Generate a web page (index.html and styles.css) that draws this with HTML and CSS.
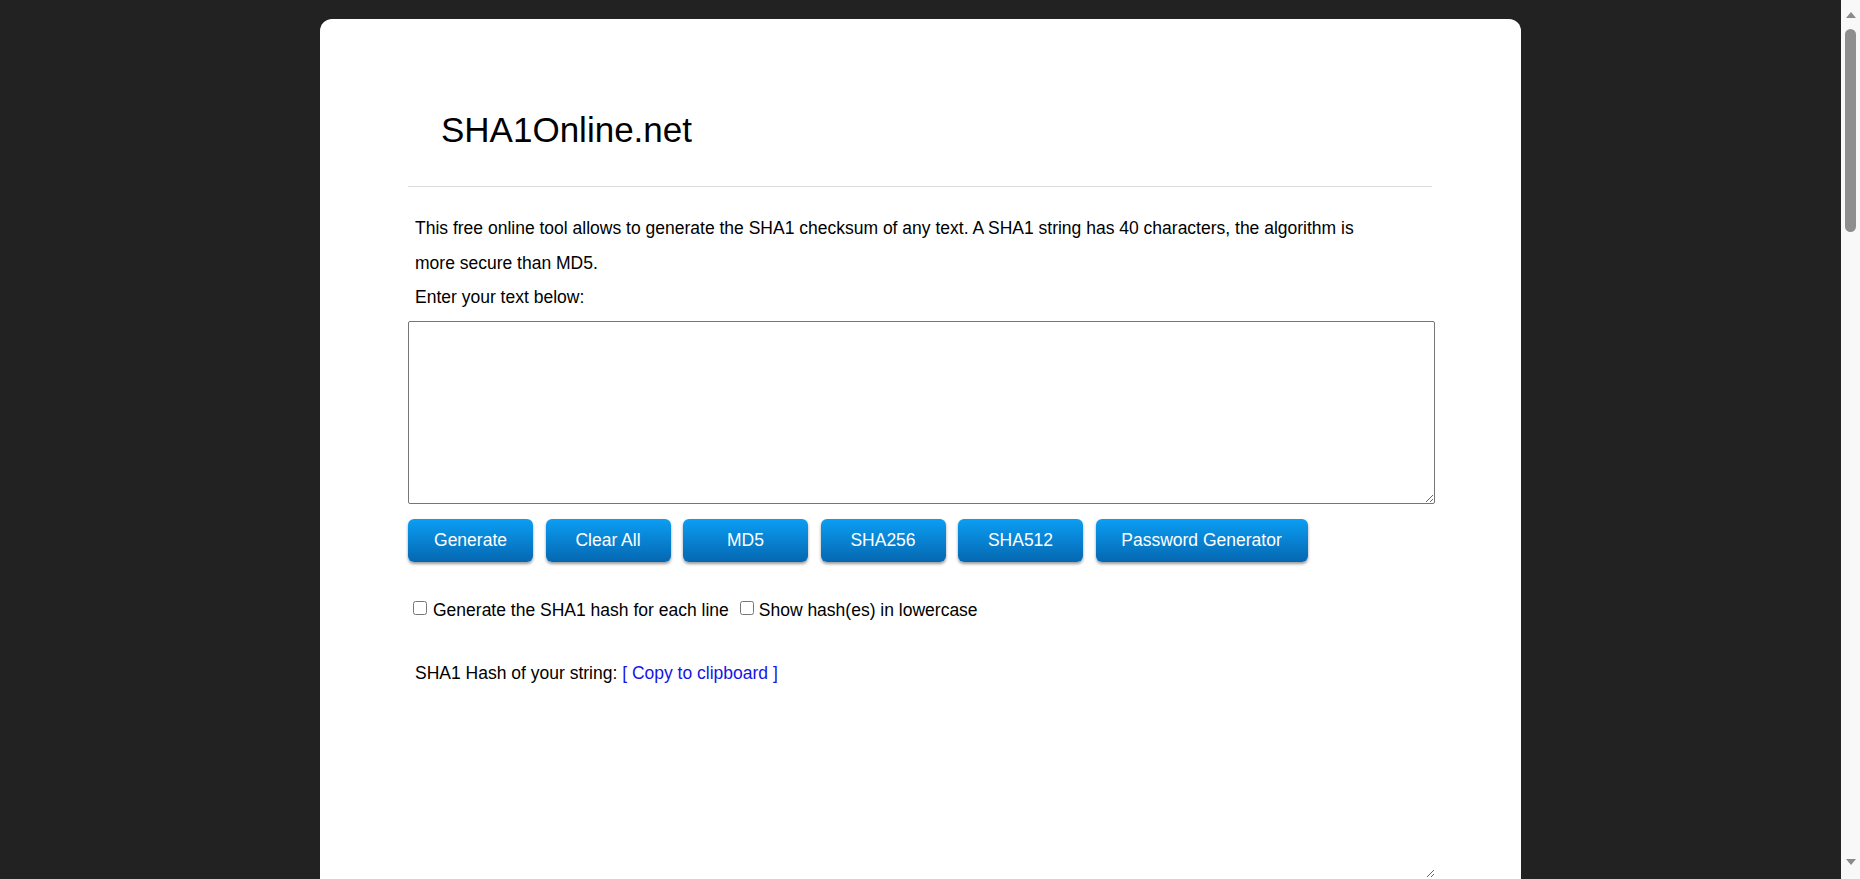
FILE: index.html
```html
<!DOCTYPE html>
<html lang="en">
<head>
<meta charset="utf-8">
<title>SHA1Online.net</title>
<link rel="stylesheet" href="styles.css">
</head>
<body>
<div class="screen">
  <div class="viewport">
    <div class="card">
      <header class="masthead"><h1 class="logo">SHA1Online.net</h1></header>
      <hr class="rule">
      <div class="intro">
        <p class="desc">This free online tool allows to generate the SHA1 checksum of any text. A SHA1 string has 40 characters, the algorithm is more secure than MD5.</p>
        <p class="prompt">Enter your text below:</p>
      </div>
      <textarea class="input-area"></textarea>
      <div class="actions">
        <button class="btn" type="button">Generate</button>
        <button class="btn" type="button">Clear All</button>
        <button class="btn" type="button">MD5</button>
        <button class="btn" type="button">SHA256</button>
        <button class="btn" type="button">SHA512</button>
        <button class="btn btn-wide" type="button">Password Generator</button>
      </div>
      <div class="options">
        <label class="opt"><input type="checkbox" class="check">Generate the SHA1 hash for each line</label>
        <label class="opt"><input type="checkbox" class="check">Show hash(es) in lowercase</label>
      </div>
      <div class="result-label">SHA1 Hash of your string: <a href="#" class="copy">[ Copy to clipboard ]</a></div>
      <textarea class="output-area"></textarea>
    </div>
  </div>
  <div class="scrollbar">
    <span class="arrow arrow-up"></span>
    <span class="thumb"></span>
    <span class="spacer"></span>
    <span class="arrow arrow-down"></span>
  </div>
</div>
</body>
</html>
```
FILE: styles.css
```css
html, body {
  margin: 0;
  height: 100%;
  overflow: hidden;
}
body {
  font-family: "Liberation Sans", Arial, sans-serif;
  font-size: 17.5px;
  color: #000;
}
.screen {
  display: flex;
  height: 100vh;
}
.viewport {
  flex: 1;
  background: #222222;
  overflow: hidden;
}
.card {
  width: 1201px;
  box-sizing: border-box;
  margin: 19px auto 0;
  background: #fff;
  border-radius: 12px;
  padding: 91px 86px 80px 88px;
}
.logo {
  margin: 0;
  font-size: 35px;
  font-weight: normal;
  line-height: 40px;
  padding-left: 33px;
}
.rule {
  margin: 36px 0 0;
  border: 0;
  border-top: 1px solid #dcdcdc;
  height: 0;
  width: 1024px;
}
.intro {
  margin-top: 24px;
  padding-left: 7px;
  line-height: 34.5px;
}
.desc {
  margin: 0;
  max-width: 960px;
}
.prompt {
  margin: 0;
}
.input-area {
  display: block;
  margin: 6px 0 0;
  width: 1027px;
  height: 183px;
  box-sizing: border-box;
  border: 1px solid #767676;
  border-radius: 2px;
}
.actions {
  display: flex;
  gap: 12.5px;
  margin-top: 15px;
}
.btn {
  width: 125px;
  height: 43px;
  border: 0;
  border-radius: 6px;
  background: linear-gradient(#0b9ef3, #0567b1);
  color: #fff;
  font-family: "Liberation Sans", Arial, sans-serif;
  font-size: 17.5px;
  box-shadow: 0 2px 3px rgba(0, 0, 0, 0.4);
  padding: 0;
}
.btn-wide {
  width: 212px;
}
.options {
  display: flex;
  align-items: center;
  margin-top: 36px;
  padding-left: 5px;
  line-height: 24px;
}
.opt {
  display: flex;
  align-items: center;
}
.opt + .opt {
  margin-left: 11px;
}
.check {
  width: 14px;
  height: 14px;
  margin: 0 6px 0 0;
  position: relative;
  top: -2px;
}
.opt + .opt .check {
  margin-right: 5px;
}
.result-label {
  margin-top: 34px;
  padding-left: 7px;
  line-height: 35px;
}
.copy {
  color: #1515e6;
  text-decoration: none;
}
.output-area {
  display: block;
  margin: 5px 0 0;
  width: 1027px;
  height: 182px;
  box-sizing: border-box;
  border: none;
  outline: none;
}
.scrollbar {
  width: 19px;
  background: #f8f8f8;
  display: flex;
  flex-direction: column;
  align-items: center;
}
.arrow {
  width: 0;
  height: 0;
  border-left: 5px solid transparent;
  border-right: 5px solid transparent;
}
.arrow-up {
  border-bottom: 6px solid #8a8a8a;
  margin-top: 12px;
}
.thumb {
  margin-top: 11px;
  width: 11px;
  height: 203px;
  border-radius: 6px;
  background: #8e8e8e;
}
.spacer {
  flex: 1;
}
.arrow-down {
  border-top: 6px solid #8a8a8a;
  margin-bottom: 14px;
}
```
